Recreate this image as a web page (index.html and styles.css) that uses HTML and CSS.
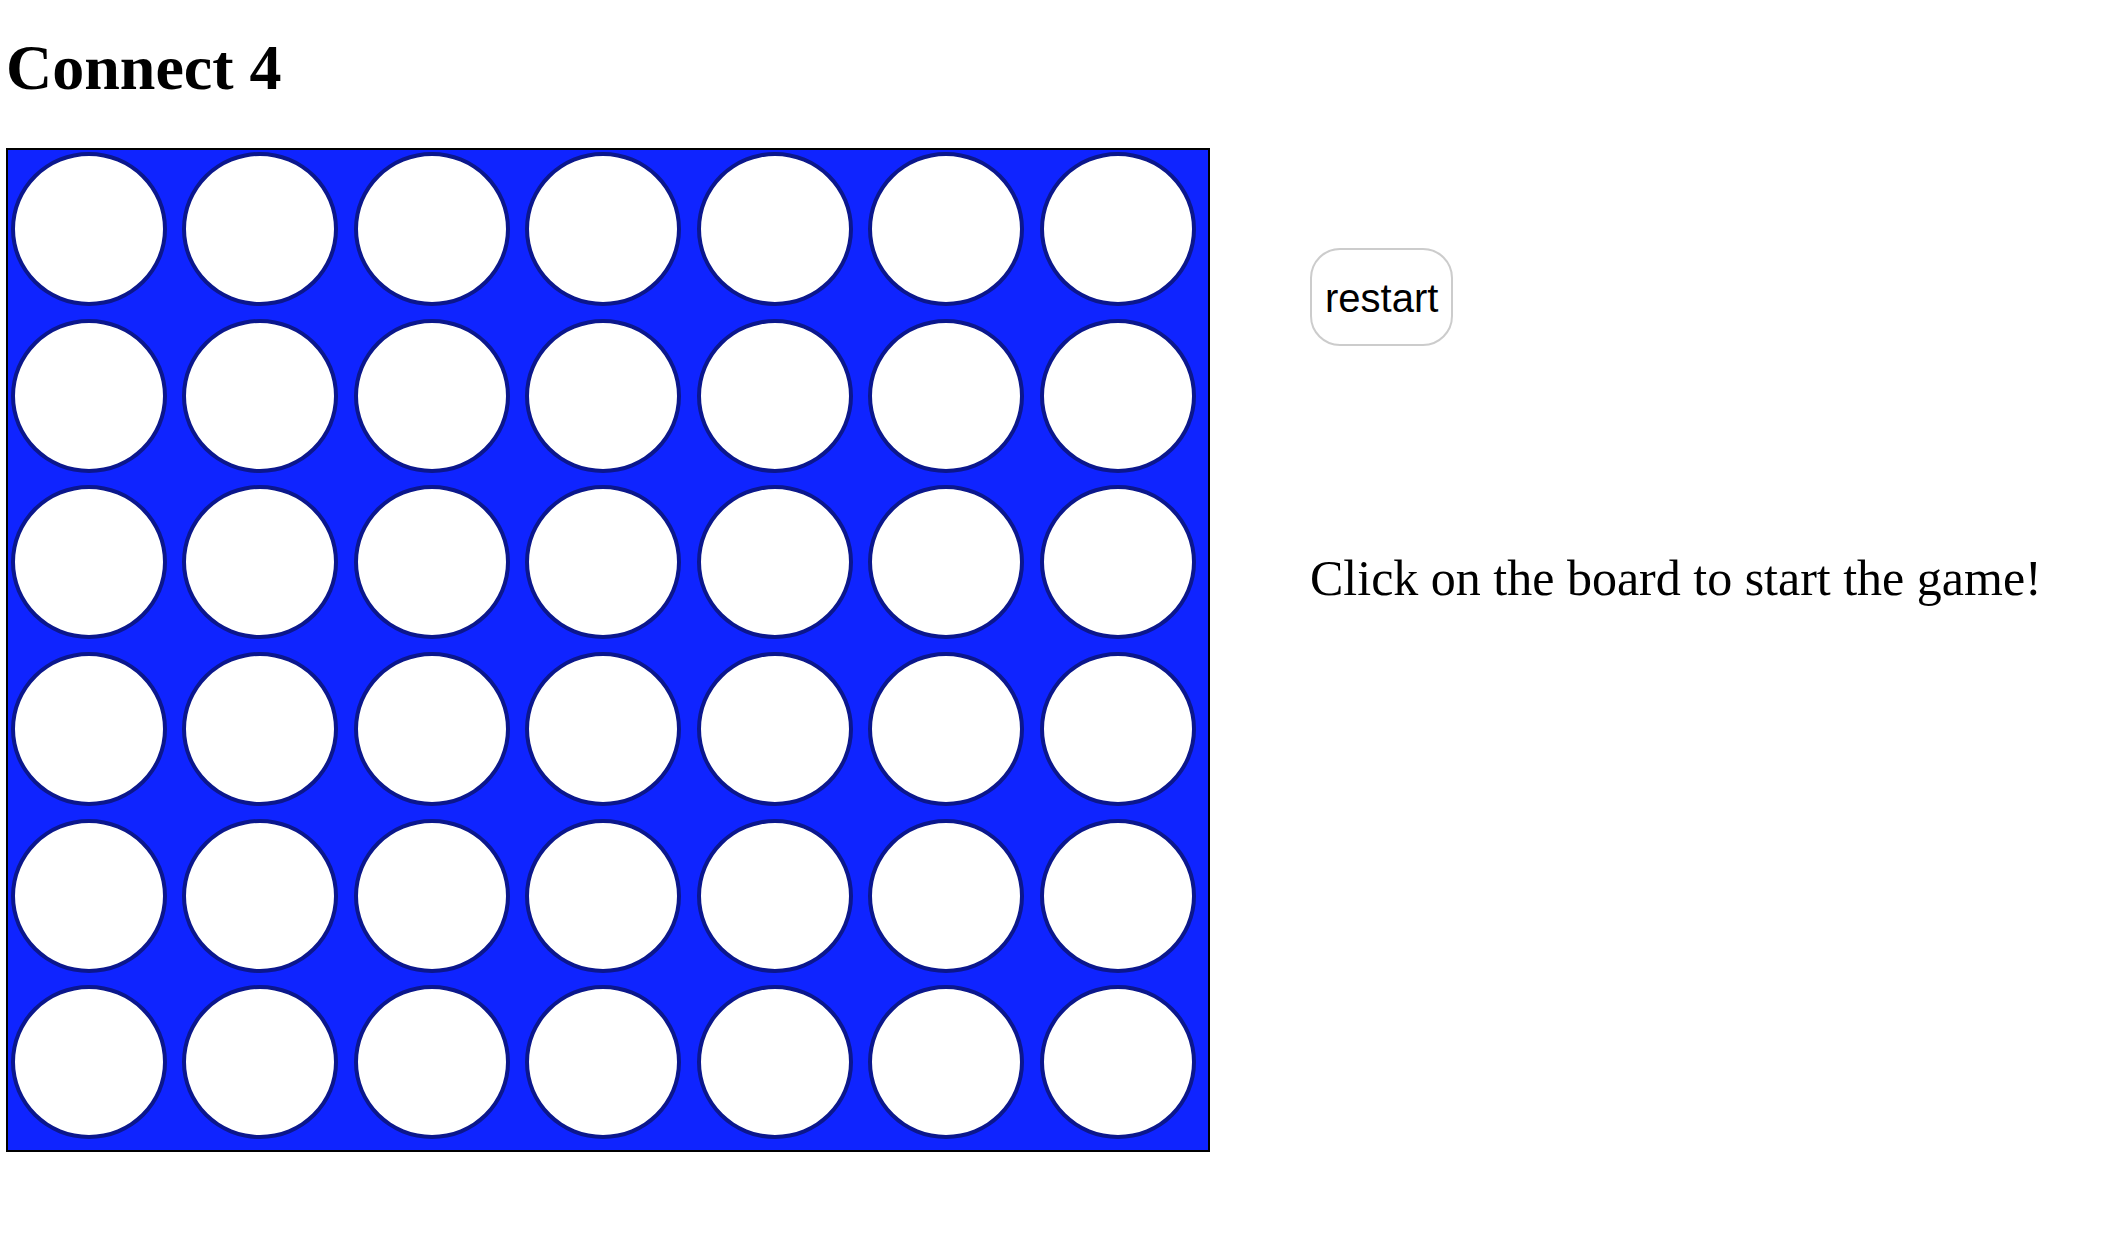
FILE: index.html
```html
<!DOCTYPE html>
<html lang="en">
<head>
<meta charset="utf-8">
<title>Connect 4</title>
<link rel="stylesheet" href="styles.css">
</head>
<body>
<div class="page">
  <h1 class="title">Connect 4</h1>
  <div class="game">
    <div class="board">
      <div class="cell"><div class="hole"></div></div><div class="cell"><div class="hole"></div></div><div class="cell"><div class="hole"></div></div><div class="cell"><div class="hole"></div></div><div class="cell"><div class="hole"></div></div><div class="cell"><div class="hole"></div></div><div class="cell"><div class="hole"></div></div>
      <div class="cell"><div class="hole"></div></div><div class="cell"><div class="hole"></div></div><div class="cell"><div class="hole"></div></div><div class="cell"><div class="hole"></div></div><div class="cell"><div class="hole"></div></div><div class="cell"><div class="hole"></div></div><div class="cell"><div class="hole"></div></div>
      <div class="cell"><div class="hole"></div></div><div class="cell"><div class="hole"></div></div><div class="cell"><div class="hole"></div></div><div class="cell"><div class="hole"></div></div><div class="cell"><div class="hole"></div></div><div class="cell"><div class="hole"></div></div><div class="cell"><div class="hole"></div></div>
      <div class="cell"><div class="hole"></div></div><div class="cell"><div class="hole"></div></div><div class="cell"><div class="hole"></div></div><div class="cell"><div class="hole"></div></div><div class="cell"><div class="hole"></div></div><div class="cell"><div class="hole"></div></div><div class="cell"><div class="hole"></div></div>
      <div class="cell"><div class="hole"></div></div><div class="cell"><div class="hole"></div></div><div class="cell"><div class="hole"></div></div><div class="cell"><div class="hole"></div></div><div class="cell"><div class="hole"></div></div><div class="cell"><div class="hole"></div></div><div class="cell"><div class="hole"></div></div>
      <div class="cell"><div class="hole"></div></div><div class="cell"><div class="hole"></div></div><div class="cell"><div class="hole"></div></div><div class="cell"><div class="hole"></div></div><div class="cell"><div class="hole"></div></div><div class="cell"><div class="hole"></div></div><div class="cell"><div class="hole"></div></div>
    </div>
    <div class="side">
      <button class="restart" type="button">restart</button>
      <p class="status">Click on the board to start the game!</p>
    </div>
  </div>
</div>
</body>
</html>
```

FILE: styles.css
```css
html, body {
  margin: 0;
  padding: 0;
  background: #ffffff;
}

body {
  font-family: "Liberation Serif", "Times New Roman", serif;
  color: #000000;
}

.page {
  display: flex;
  flex-direction: column;
  align-items: flex-start;
  padding: 31px 0 0 6px;
}

.title {
  margin: 0 0 43px 0;
  font-size: 64px;
  font-weight: bold;
  line-height: normal;
}

.game {
  display: flex;
  align-items: flex-start;
  gap: 100px;
}

.board {
  width: 1200px;
  height: 1000px;
  border: 2px solid #000000;
  background: #0f24ff;
  display: grid;
  grid-template-columns: repeat(7, 1fr);
  grid-template-rows: repeat(6, 1fr);
}

.cell {
  display: flex;
  align-items: flex-start;
  justify-content: flex-start;
}

.hole {
  margin: 2px 0 0 3px;
  width: 148px;
  height: 146px;
  border: 4px solid #0b178c;
  border-radius: 50%;
  background: #ffffff;
}

.side {
  display: flex;
  flex-direction: column;
  align-items: flex-start;
  padding-top: 100px;
}

.restart {
  box-sizing: border-box;
  margin: 0;
  height: 98px;
  padding: 25px 13px 23px 13px;
  font-family: "Liberation Sans", Arial, sans-serif;
  font-size: 40px;
  line-height: 46px;
  color: #000000;
  background: #ffffff;
  border: 2px solid #cccccc;
  border-radius: 30px;
}

.status {
  margin: 203px 0 0 0;
  font-size: 50px;
  line-height: normal;
}
```
